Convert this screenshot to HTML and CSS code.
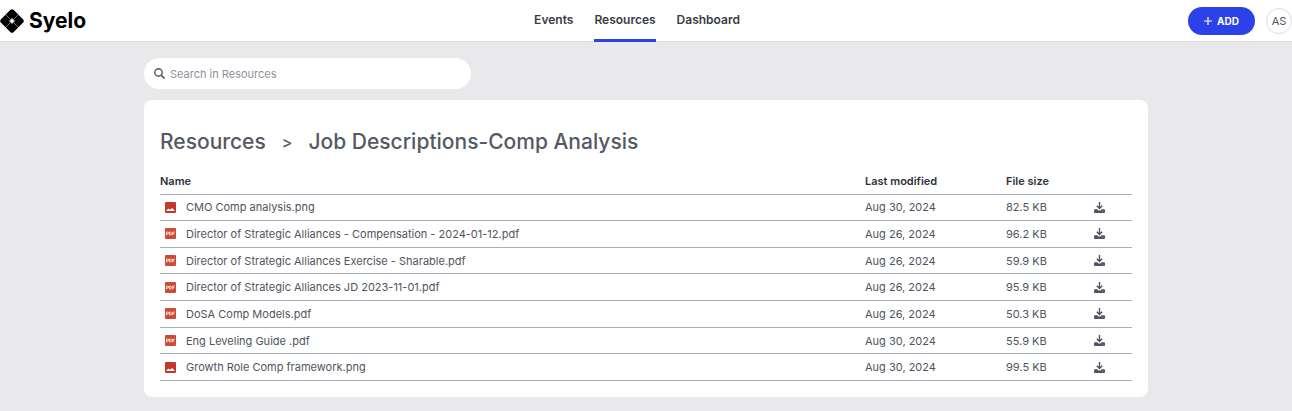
FILE: index.html
```html
<!DOCTYPE html>
<html lang="en">
<head>
<meta charset="utf-8">
<title>Syelo – Resources</title>
<link rel="stylesheet" href="styles.css">
</head>
<body>
<svg class="defs" aria-hidden="true">
  <symbol id="icon-image" viewBox="0 0 11 11"><rect width="11" height="11" rx="1" fill="#bf3a27"/><path d="M1.500 9 1.500 8.200 3.500 6.600 5 7.800 7 6 9.500 8.200V9Z" fill="#fff"/></symbol>
  <symbol id="icon-pdf" viewBox="0 0 11 11"><rect width="11" height="11" rx="1" fill="#cf4a35"/><g fill="none" stroke="#fff" stroke-width=".8"><path d="M1.600 7.300V4.100H2.700a.9.900 0 0 1 0 1.900H1.600M4.500 4.100V6.900H5.200a1.300 1.400 0 0 0 0-2.800ZM7.700 7.300V4.100H9.700M7.700 5.700H9.300"/></g></symbol>
  <symbol id="icon-download" viewBox="0 0 11 11"><path d="M5.500 0V6M2.800 3.700 5.500 6.400 8.200 3.700" fill="none" stroke="#4f5464" stroke-width="1.400"/><path d="M1 7.200H3.300L4.500 8.400H6.500L7.700 7.200H10a1 1 0 0 1 1 1V10a1 1 0 0 1-1 1H1a1 1 0 0 1-1-1V8.200a1 1 0 0 1 1-1Z" fill="#4f5464"/><path d="M8.300 9.400H9.300" stroke="#aaadb8" stroke-width=".7"/></symbol>
</svg>
<header class="topbar">
  <a class="brand" href="#">
    <svg class="brand-mark" viewBox="0 0 26 26" aria-hidden="true"><rect x="4" y="4" width="18" height="18" rx="2.500" transform="rotate(45 13 13)" fill="#000"/><path d="M7 7 19 19M19 7 7 19" stroke="#aaa" stroke-width=".7"/><path d="M13 9.500 14 12 16.500 13 14 14 13 16.500 12 14 9.500 13 12 12Z" fill="#fff"/></svg>
    <span>Syelo</span>
  </a>
  <nav class="nav">
    <a href="#">Events</a>
    <a class="active" href="#" aria-current="page">Resources</a>
    <a href="#">Dashboard</a>
  </nav>
  <div class="actions">
    <button class="add" type="button"><svg class="plus" viewBox="0 0 8 8" aria-hidden="true"><path d="M4 0V8M0 4H8" stroke="#fff" stroke-width="1.200"/></svg>ADD</button>
    <button class="avatar" type="button">AS</button>
  </div>
</header>
<main class="content">
  <label class="search">
    <svg class="search-icon" viewBox="0 0 11 11" aria-hidden="true"><circle cx="4.500" cy="4.500" r="3.700" fill="none" stroke="#4f5464" stroke-width="1.400"/><path d="M7.200 7.200 10.500 10.500" stroke="#4f5464" stroke-width="1.600"/></svg>
    <input type="text" placeholder="Search in Resources" aria-label="Search in Resources">
  </label>
  <section class="card">
    <h1 class="crumbs"><a href="#">Resources</a><span class="sep">&gt;</span><span>Job Descriptions-Comp Analysis</span></h1>
    <table class="files">
      <colgroup><col><col class="col-date"><col class="col-size"><col class="col-get"></colgroup>
      <thead><tr><th>Name</th><th>Last modified</th><th>File size</th><td></td></tr></thead>
      <tbody>
        <tr><td><a class="file" href="#"><svg class="icon"><use href="#icon-image"/></svg>CMO Comp analysis.png</a></td><td>Aug 30, 2024</td><td>82.5 KB</td><td><button class="get" type="button" aria-label="Download"><svg class="icon"><use href="#icon-download"/></svg></button></td></tr>
        <tr><td><a class="file" href="#"><svg class="icon"><use href="#icon-pdf"/></svg>Director of Strategic Alliances - Compensation - 2024-01-12.pdf</a></td><td>Aug 26, 2024</td><td>96.2 KB</td><td><button class="get" type="button" aria-label="Download"><svg class="icon"><use href="#icon-download"/></svg></button></td></tr>
        <tr><td><a class="file" href="#"><svg class="icon"><use href="#icon-pdf"/></svg>Director of Strategic Alliances Exercise - Sharable.pdf</a></td><td>Aug 26, 2024</td><td>59.9 KB</td><td><button class="get" type="button" aria-label="Download"><svg class="icon"><use href="#icon-download"/></svg></button></td></tr>
        <tr><td><a class="file" href="#"><svg class="icon"><use href="#icon-pdf"/></svg>Director of Strategic Alliances JD 2023-11-01.pdf</a></td><td>Aug 26, 2024</td><td>95.9 KB</td><td><button class="get" type="button" aria-label="Download"><svg class="icon"><use href="#icon-download"/></svg></button></td></tr>
        <tr><td><a class="file" href="#"><svg class="icon"><use href="#icon-pdf"/></svg>DoSA Comp Models.pdf</a></td><td>Aug 26, 2024</td><td>50.3 KB</td><td><button class="get" type="button" aria-label="Download"><svg class="icon"><use href="#icon-download"/></svg></button></td></tr>
        <tr><td><a class="file" href="#"><svg class="icon"><use href="#icon-pdf"/></svg>Eng Leveling Guide .pdf</a></td><td>Aug 30, 2024</td><td>55.9 KB</td><td><button class="get" type="button" aria-label="Download"><svg class="icon"><use href="#icon-download"/></svg></button></td></tr>
        <tr><td><a class="file" href="#"><svg class="icon"><use href="#icon-image"/></svg>Growth Role Comp framework.png</a></td><td>Aug 30, 2024</td><td>99.5 KB</td><td><button class="get" type="button" aria-label="Download"><svg class="icon"><use href="#icon-download"/></svg></button></td></tr>
      </tbody>
    </table>
  </section>
</main>
</body>
</html>
```
FILE: styles.css
```css
* { box-sizing: border-box; }
body {
  margin: 0;
  background: #e9e9eb;
  color: #50545e;
  font: 400 11px/16px Inter, sans-serif;
}
a { color: inherit; text-decoration: none; }
button, input { font: inherit; color: inherit; border: 0; padding: 0; }
.defs { display: none; }
.topbar {
  display: grid;
  grid-template-columns: 1fr auto 1fr;
  height: 42px;
  background: #fff;
  border-bottom: 1px solid #dcdcde;
}
.brand {
  display: flex;
  align-items: center;
  gap: 4px;
  color: #000;
  font-size: 21px;
  font-weight: 700;
}
.brand-mark { width: 26px; height: 26px; margin-left: -1px; }
.nav { display: flex; gap: 21px; margin-right: 18px; }
.nav a {
  height: 42px;
  color: #3a3c44;
  font-size: 12px;
  font-weight: 600;
  line-height: 39px;
}
.nav .active { border-bottom: 3px solid #2c42e8; }
.actions {
  display: flex;
  align-items: center;
  justify-content: flex-end;
  gap: 11px;
}
.add {
  display: flex;
  align-items: center;
  justify-content: center;
  gap: 5px;
  width: 67px;
  height: 28px;
  border-radius: 14px;
  background: #2c42e8;
  color: #fff;
  font-size: 10px;
  font-weight: 700;
}
.plus { width: 8px; height: 8px; }
.avatar {
  width: 26px;
  height: 26px;
  border: 1px solid #dddde0;
  border-radius: 50%;
  background: #fff;
}
.content { max-width: 1004px; margin: 0 auto; padding: 16px 0 14px; }
.search {
  display: flex;
  align-items: center;
  gap: 5px;
  width: 327px;
  height: 31px;
  padding: 0 10px;
  border-radius: 16px;
  background: #fff;
}
.search-icon { width: 11px; height: 11px; flex: none; }
.search input { flex: 1; min-width: 0; background: none; outline: 0; }
.search input::placeholder { color: #8e919b; opacity: 1; }
.card {
  margin-top: 11px;
  padding: 26px 16px 16px;
  border-radius: 8px;
  background: #fff;
}
.crumbs {
  display: flex;
  align-items: center;
  gap: 16px;
  margin: 0 0 10px;
  color: #555964;
  font-size: 21px;
  font-weight: 500;
  line-height: 32px;
}
.sep { font-size: 16px; }
.files {
  width: 100%;
  height: 213px;
  table-layout: fixed;
  border-collapse: collapse;
}
.files tr { height: 26px; }
.col-date { width: 141px; }
.col-size { width: 88px; }
.col-get { width: 38px; }
.files th, .files td { padding: 0; text-align: left; border-bottom: 1px solid #a9afb9; }
.files th { color: #30323c; font-weight: 600; }
.file { display: flex; align-items: center; gap: 10px; padding-left: 5px; }
.icon { display: block; width: 11px; height: 11px; flex: none; }
.get { display: block; background: none; }
```
